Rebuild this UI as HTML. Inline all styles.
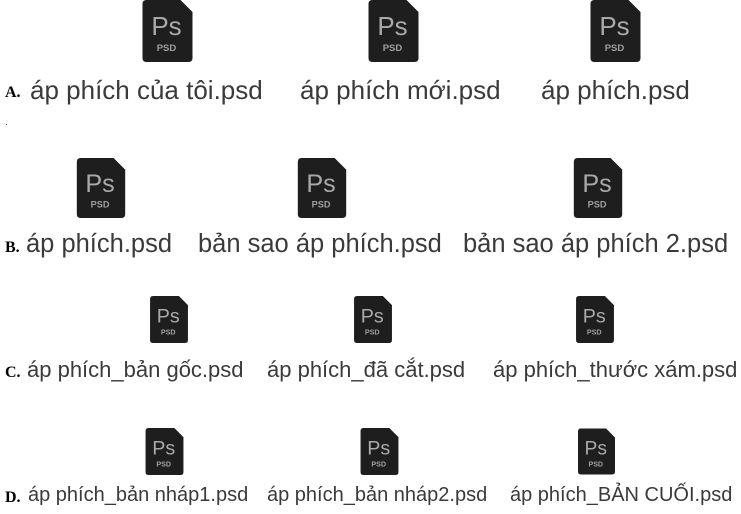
<!DOCTYPE html>
<html><head><meta charset="utf-8"><style>
body{margin:0;width:741px;height:514px;background:#fff;position:relative;overflow:hidden;font-family:"Liberation Sans",Arial,sans-serif;color:#3a3a3a}
.t{position:absolute;white-space:nowrap;line-height:1}
.l{position:absolute;font-family:"Liberation Serif",serif;font-weight:bold;color:#000;font-size:16px;line-height:1}
svg{position:absolute}
</style></head><body>
<svg width="0" height="0" style="position:absolute"><defs>
<symbol id="ps" viewBox="0 0 50 62">
<path d="M4 0H38L50 12V58Q50 62 46 62H4Q0 62 0 58V4Q0 0 4 0Z" fill="#1e1e1e"/>
<text x="24" y="35" text-anchor="middle" font-family="Liberation Sans,sans-serif" font-size="26" fill="#a9a9a9">Ps</text>
<text x="24" y="51" text-anchor="middle" font-family="Liberation Sans,sans-serif" font-size="9.5" font-weight="bold" fill="#a0a0a0">PSD</text>
</symbol></defs></svg>

<svg style="left:142px;top:0" width="51" height="62"><use href="#ps"/></svg>
<svg style="left:368px;top:0" width="51" height="62"><use href="#ps"/></svg>
<svg style="left:590px;top:0" width="51" height="62"><use href="#ps"/></svg>
<div class="l" style="left:5px;top:85px">A.</div>
<div class="t" style="left:30px;top:77px;font-size:26px">áp phích của tôi.psd</div>
<div class="t" style="left:300px;top:77px;font-size:26px">áp phích mới.psd</div>
<div class="t" style="left:541px;top:77px;font-size:26px">áp phích.psd</div>
<div class="t" style="left:5px;top:118px;font-size:10px">.</div>

<svg style="left:76px;top:158px" width="50" height="60"><use href="#ps"/></svg>
<svg style="left:297px;top:158px" width="50" height="60"><use href="#ps"/></svg>
<svg style="left:573px;top:158px" width="50" height="60"><use href="#ps"/></svg>
<div class="l" style="left:5px;top:240px">B.</div>
<div class="t" style="left:26px;top:232px;font-size:25.5px">áp phích.psd</div>
<div class="t" style="left:198px;top:232px;font-size:25.5px">bản sao áp phích.psd</div>
<div class="t" style="left:463px;top:232px;font-size:25.5px">bản sao áp phích 2.psd</div>

<svg style="left:148px;top:296px" width="42" height="47"><use href="#ps"/></svg>
<svg style="left:352px;top:296px" width="42" height="47"><use href="#ps"/></svg>
<svg style="left:574px;top:296px" width="42" height="47"><use href="#ps"/></svg>
<div class="l" style="left:5px;top:365px">C.</div>
<div class="t" style="left:27px;top:359px;font-size:22px">áp phích_bản gốc.psd</div>
<div class="t" style="left:267px;top:359px;font-size:22px">áp phích_đã cắt.psd</div>
<div class="t" style="left:493px;top:359px;font-size:22px">áp phích_thước xám.psd</div>

<svg style="left:145px;top:428px" width="39" height="47"><use href="#ps"/></svg>
<svg style="left:360px;top:428px" width="39" height="47"><use href="#ps"/></svg>
<svg style="left:578px;top:428px" width="37" height="47"><use href="#ps"/></svg>
<div class="l" style="left:5px;top:490px">D.</div>
<div class="t" style="left:28px;top:485px;font-size:20px">áp phích_bản nháp1.psd</div>
<div class="t" style="left:267px;top:485px;font-size:20px">áp phích_bản nháp2.psd</div>
<div class="t" style="left:510px;top:485px;font-size:20px">áp phích_BẢN CUỐI.psd</div>
</body></html>
